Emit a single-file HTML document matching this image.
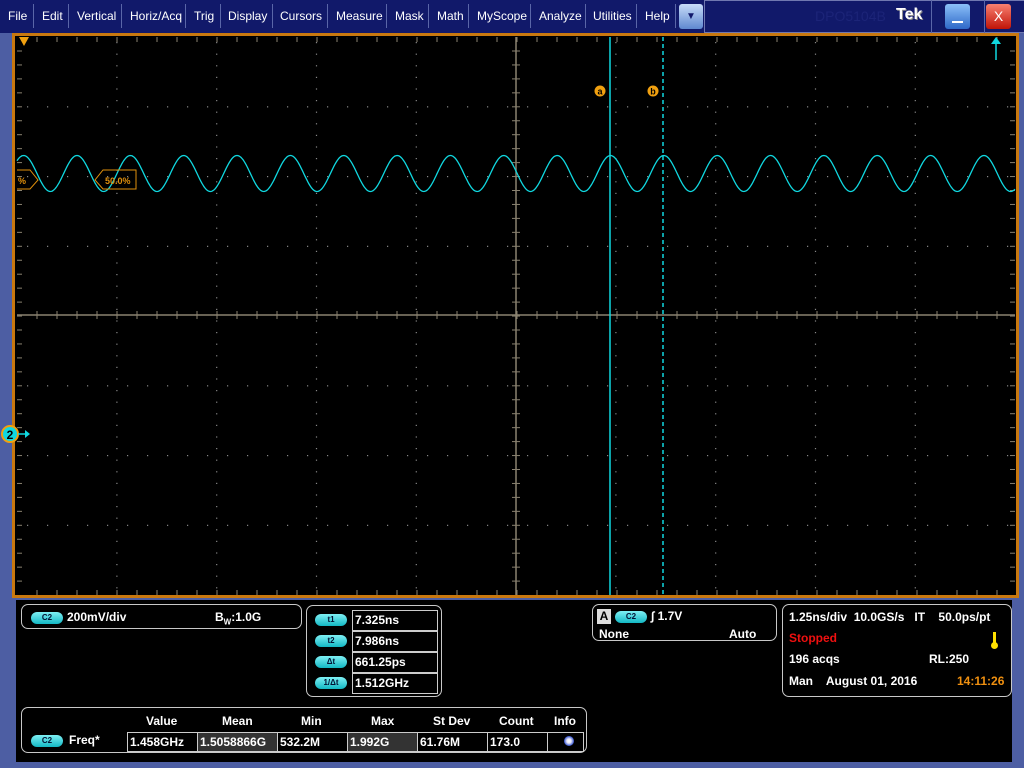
<!DOCTYPE html>
<html><head><meta charset="utf-8"><style>
*{margin:0;padding:0;box-sizing:border-box}
body{width:1024px;height:768px;background:#4d5ea3;position:relative;overflow:hidden;font-family:"Liberation Sans",sans-serif;font-weight:bold;color:#fff}
#menu{position:absolute;left:0;top:0;width:1024px;height:33px;background:#11196a}
.mi{position:absolute;top:9px;font-size:12px;font-weight:normal;color:#fff}
.sep{position:absolute;top:4px;width:1px;height:24px;background:#5a66a8}
#frame{position:absolute;left:12px;top:33px;width:1007px;height:565px;border:3px solid #c8780f;background:#000}
.pan{position:absolute;background:#000}
.box{position:absolute;border:1px solid #c8c8c8;border-radius:7px}
.pill{position:absolute;width:32px;height:12px;border-radius:7px;background:linear-gradient(#7ff0f4,#13b8c4);color:#013;font-size:8px;text-align:center;line-height:12px}
.t{position:absolute;font-size:12px;white-space:nowrap}
.cell{position:absolute;border:1px solid #ccc;font-size:12px;padding-left:2px;line-height:18px}
</style></head><body>
<div id="menu">
<span class="mi" style="left:8px">File</span><div class="sep" style="left:33px"></div>
<span class="mi" style="left:42px">Edit</span><div class="sep" style="left:68px"></div>
<span class="mi" style="left:77px">Vertical</span><div class="sep" style="left:121px"></div>
<span class="mi" style="left:130px">Horiz/Acq</span><div class="sep" style="left:185px"></div>
<span class="mi" style="left:194px">Trig</span><div class="sep" style="left:220px"></div>
<span class="mi" style="left:228px">Display</span><div class="sep" style="left:272px"></div>
<span class="mi" style="left:280px">Cursors</span><div class="sep" style="left:327px"></div>
<span class="mi" style="left:336px">Measure</span><div class="sep" style="left:386px"></div>
<span class="mi" style="left:395px">Mask</span><div class="sep" style="left:428px"></div>
<span class="mi" style="left:437px">Math</span><div class="sep" style="left:468px"></div>
<span class="mi" style="left:477px">MyScope</span><div class="sep" style="left:530px"></div>
<span class="mi" style="left:539px">Analyze</span><div class="sep" style="left:585px"></div>
<span class="mi" style="left:593px">Utilities</span><div class="sep" style="left:636px"></div>
<span class="mi" style="left:645px">Help</span><div class="sep" style="left:675px"></div>
<div style="position:absolute;left:679px;top:4px;width:24px;height:25px;border-radius:3px;background:linear-gradient(#c8dcf8,#5f88d0);color:#11196a;font-size:10px;text-align:center;line-height:25px">▼</div>
<div style="position:absolute;left:704px;top:0;width:320px;height:33px;border:1px solid #7078b0;border-right:none;background:#11196a"></div>
<span style="position:absolute;left:815px;top:8px;font-size:14px;color:#1c2478;font-weight:normal">DPO5104B</span>
<span style="position:absolute;left:896px;top:6px;font-size:16px;color:#fff;text-shadow:1px 1px 0 #888">Tek</span>
<div class="sep" style="left:931px;top:0;height:33px"></div>
<div style="position:absolute;left:945px;top:4px;width:25px;height:25px;border-radius:3px;background:linear-gradient(#8cc0f8,#2e68c8);"><div style="position:absolute;left:7px;top:17px;width:11px;height:2px;background:#fff"></div></div>
<div class="sep" style="left:984px;top:0;height:33px"></div>
<div style="position:absolute;left:986px;top:4px;width:25px;height:25px;border-radius:3px;background:linear-gradient(#f88070,#c01408);color:#fff;font-size:14px;font-weight:normal;text-align:center;line-height:25px">X</div>
</div>
<div id="frame"></div>
<svg id="g" width="1024" height="600" style="position:absolute;left:0;top:0"></svg>
<div class="pan" style="left:16px;top:600px;width:996px;height:162px"></div>
<div class="box" style="left:21px;top:604px;width:281px;height:25px"></div>
<div class="pill" style="left:31px;top:612px">C2</div>
<span class="t" style="left:67px;top:610px">200mV/div</span>
<span class="t" style="left:215px;top:610px">B<sub style="font-size:8px">W</sub>:1.0G</span>
<div class="box" style="left:306px;top:605px;width:136px;height:92px"></div>
<div class="pill" style="left:315px;top:614px">t1</div><div class="cell" style="left:352px;top:610px;width:86px;height:21px">7.325ns</div>
<div class="pill" style="left:315px;top:635px">t2</div><div class="cell" style="left:352px;top:631px;width:86px;height:21px">7.986ns</div>
<div class="pill" style="left:315px;top:656px">Δt</div><div class="cell" style="left:352px;top:652px;width:86px;height:21px">661.25ps</div>
<div class="pill" style="left:315px;top:677px">1/Δt</div><div class="cell" style="left:352px;top:673px;width:86px;height:21px">1.512GHz</div>
<div class="box" style="left:21px;top:707px;width:566px;height:46px"></div>
<span class="t" style="left:146px;top:714px">Value</span><span class="t" style="left:222px;top:714px">Mean</span><span class="t" style="left:301px;top:714px">Min</span><span class="t" style="left:371px;top:714px">Max</span><span class="t" style="left:433px;top:714px">St Dev</span><span class="t" style="left:499px;top:714px">Count</span><span class="t" style="left:554px;top:714px">Info</span>
<div class="pill" style="left:31px;top:735px">C2</div><span class="t" style="left:69px;top:733px">Freq*</span>
<div class="cell" style="left:127px;top:732px;width:71px;height:20px">1.458GHz</div>
<div class="cell" style="left:197px;top:732px;width:81px;height:20px;background:#333">1.5058866G</div>
<div class="cell" style="left:277px;top:732px;width:71px;height:20px">532.2M</div>
<div class="cell" style="left:347px;top:732px;width:71px;height:20px;background:#333">1.992G</div>
<div class="cell" style="left:417px;top:732px;width:131px;height:20px">61.76M</div>
<div class="cell" style="left:487px;top:732px;width:61px;height:20px">173.0</div>
<div class="cell" style="left:547px;top:732px;width:37px;height:20px"></div>
<div style="position:absolute;left:564px;top:736px;width:10px;height:10px;border-radius:50%;background:radial-gradient(#fff 0,#e8e8f8 30%,#3050d0 70%)"></div>
<div class="box" style="left:592px;top:604px;width:185px;height:37px"></div>
<div style="position:absolute;left:597px;top:609px;width:14px;height:15px;background:#ddd;color:#000;font-size:12px;text-align:center;line-height:15px">A</div>
<div class="pill" style="left:615px;top:611px">C2</div>
<span class="t" style="left:651px;top:609px">∫ 1.7V</span>
<span class="t" style="left:599px;top:627px">None</span><span class="t" style="left:729px;top:627px">Auto</span>
<div class="box" style="left:782px;top:604px;width:230px;height:93px"></div>
<span class="t" style="left:789px;top:610px">1.25ns/div&nbsp; 10.0GS/s&nbsp;&nbsp; IT&nbsp;&nbsp;&nbsp; 50.0ps/pt</span>
<span class="t" style="left:789px;top:631px;color:#f01010">Stopped</span>
<div style="position:absolute;left:993px;top:632px;width:3px;height:12px;background:#ffe000"></div><div style="position:absolute;left:991px;top:642px;width:7px;height:7px;border-radius:50%;background:#ffe000"></div>
<span class="t" style="left:789px;top:652px">196 acqs</span><span class="t" style="left:929px;top:652px">RL:250</span>
<span class="t" style="left:789px;top:674px">Man&nbsp;&nbsp;&nbsp; August 01, 2016</span><span class="t" style="left:957px;top:674px;color:#f09010">14:11:26</span>
<script>
var s='',x0=17,x1=1015,y0=37,y1=595,dx=99.8,dy=69.75;
s+='<rect x="'+x0+'" y="'+y0+'" width="998" height="558" fill="#000"/>';
for(var i=1;i<10;i++){var x=x0+i*dx;if(i==5)continue;for(var y=y0+5;y<y1;y+=11.6)s+='<rect x="'+(x-0.5)+'" y="'+y+'" width="1.2" height="1.2" fill="#888"/>';}
for(var j=1;j<8;j++){var y=y0+j*dy;if(j==4)continue;for(var x=x0+10;x<x1;x+=20)s+='<rect x="'+x+'" y="'+(y-0.5)+'" width="1.2" height="1.2" fill="#888"/>';}
var cx=516,cy=315;
s+='<line x1="'+x0+'" y1="'+cy+'" x2="'+x1+'" y2="'+cy+'" stroke="#8a8270" stroke-width="1.5"/>';
s+='<line x1="'+cx+'" y1="'+y0+'" x2="'+cx+'" y2="'+y1+'" stroke="#8a8270" stroke-width="1.5"/>';
for(var x=x0+20;x<x1;x+=20){s+='<line x1="'+x+'" y1="'+(cy-4)+'" x2="'+x+'" y2="'+(cy+4)+'" stroke="#8a8270"/>';s+='<line x1="'+x+'" y1="'+y0+'" x2="'+x+'" y2="'+(y0+5)+'" stroke="#8a8270"/>';s+='<line x1="'+x+'" y1="'+(y1-5)+'" x2="'+x+'" y2="'+y1+'" stroke="#8a8270"/>';}
for(var y=y0+14;y<y1;y+=13.95){s+='<line x1="'+(cx-4)+'" y1="'+y+'" x2="'+(cx+4)+'" y2="'+y+'" stroke="#8a8270"/>';s+='<line x1="'+x0+'" y1="'+y+'" x2="'+(x0+5)+'" y2="'+y+'" stroke="#8a8270"/>';s+='<line x1="'+(x1-5)+'" y1="'+y+'" x2="'+x1+'" y2="'+y+'" stroke="#8a8270"/>';}
var p='';for(var x=x0;x<=x1;x+=1){var y=173.5-18*Math.cos(2*Math.PI*(x-77)/53.35);p+=(x==x0?'M':'L')+x+','+y.toFixed(1);}
s+='<path d="'+p+'" fill="none" stroke="#10d8e0" stroke-width="1.3"/>';
s+='<line x1="610" y1="37" x2="610" y2="595" stroke="#10d8e0" stroke-width="1.5"/>';
s+='<line x1="663" y1="37" x2="663" y2="595" stroke="#10d8e0" stroke-width="1.5" stroke-dasharray="4,3"/>';
s+='<circle cx="600" cy="91" r="5.5" fill="#f0a010"/><text x="600" y="94.5" font-size="9" fill="#000" text-anchor="middle" font-family="Liberation Sans">a</text>';
s+='<circle cx="653" cy="91" r="5.5" fill="#f0a010"/><text x="653" y="94.5" font-size="9" fill="#000" text-anchor="middle" font-family="Liberation Sans">b</text>';
s+='<path d="M17,170 L30,170 L38,180 L30,189 L17,189" fill="none" stroke="#e0900c"/><text x="18" y="184" font-size="9" fill="#e0900c" font-family="Liberation Sans">%</text>';
s+='<path d="M136,170 L103,170 L95,180 L103,189 L136,189 Z" fill="none" stroke="#e0900c"/><text x="105" y="184" font-size="9" fill="#e0900c" font-family="Liberation Sans">50.0%</text>';
s+='<path d="M19,37 L29,37 L24,46 Z" fill="#f0a010"/>';
s+='<path d="M991,44 L1001,44 L996,37 Z" fill="#10d8e0"/><line x1="996" y1="42" x2="996" y2="60" stroke="#10d8e0" stroke-width="1.5"/>';
s+='<circle cx="10" cy="434" r="8" fill="#10d8e0" stroke="#f0a010" stroke-width="2"/><text x="10" y="439" font-size="12" fill="#000" text-anchor="middle" font-family="Liberation Sans">2</text>';
s+='<line x1="18" y1="434" x2="26" y2="434" stroke="#10d8e0" stroke-width="1.5"/><path d="M25,430 L30,434 L25,438 Z" fill="#10d8e0"/>';
document.getElementById('g').innerHTML=s;
</script>
</body></html>
